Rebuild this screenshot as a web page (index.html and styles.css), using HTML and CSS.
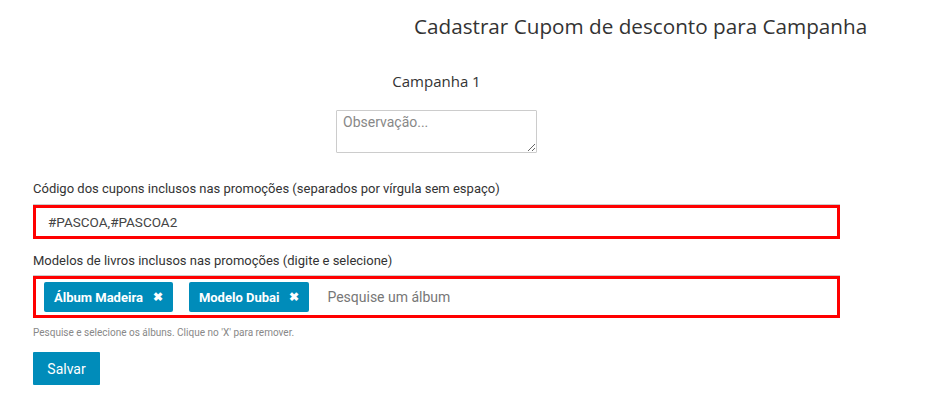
FILE: index.html
```html
<!DOCTYPE html>
<html lang="pt">
<head>
<meta charset="utf-8">
<link rel="stylesheet" href="styles.css">
</head>
<body>
<div class="page">
  <h1 class="title">Cadastrar Cupom de desconto para Campanha</h1>
  <div class="campaign">
    <div class="campaign-name">Campanha 1</div>
    <textarea class="obs" placeholder="Observação..."></textarea>
  </div>
  <label class="label">Código dos cupons inclusos nas promoções (separados por vírgula sem espaço)</label>
  <div class="field field-text">#PASCOA,#PASCOA2</div>
  <label class="label">Modelos de livros inclusos nas promoções (digite e selecione)</label>
  <div class="field field-tags">
    <span class="tag">Álbum Madeira <span class="x">✖</span></span>
    <span class="tag">Modelo Dubai <span class="x">✖</span></span>
    <span class="placeholder">Pesquise um álbum</span>
  </div>
  <div class="help">Pesquise e selecione os álbuns. Clique no 'X' para remover.</div>
  <button class="btn">Salvar</button>
</div>
</body>
</html>
```
FILE: styles.css
```css
* { box-sizing: border-box; }
body { margin: 0; background: #fff; font-family: Roboto, "Liberation Sans", sans-serif; color: #333; }
.page { width: 807px; margin-left: 33px; padding-top: 12px; }
.title { margin: 0 0 0 381px; font-family: "Open Sans", sans-serif; font-weight: 400; font-size: 20.7px; line-height: 28px; color: #333; white-space: nowrap; }
.campaign { display: flex; flex-direction: column; align-items: center; margin-top: 31px; }
.campaign-name { font-family: "Open Sans", sans-serif; font-size: 15px; line-height: 20px; color: #333; }
.obs { margin-top: 19px; width: 201px; height: 43px; border: 1px solid #ccc; border-radius: 1px; font-family: Roboto, sans-serif; font-size: 14px; padding: 3px 6px; resize: vertical; }
.obs::placeholder { color: #888; }
.label { display: block; margin-top: 28px; font-size: 13px; line-height: 16px; color: #333; }
.field { border: 3px solid #f00; margin-top: 8px; background: #fff; box-shadow: 0 -1px 0 #ccc; }
.field-text { height: 34px; padding: 0 12px; font-size: 13.5px; line-height: 28px; color: #444; }
.field-tags { height: 42px; display: flex; align-items: center; padding: 0 8px; gap: 16px; }
.label + .field-tags { margin-top: 7px; }
.field-text + .label { margin-top: 14px; }
.tag { display: inline-flex; align-items: center; height: 30px; padding: 0 10px; background: #008cba; color: #fff; font-weight: 700; font-size: 13px; border-radius: 2px; }
.tag .x { margin-left: 10px; font-size: 12px; }
.placeholder { margin-left: 2px; font-size: 14px; color: #777; }
.help { margin-top: 9px; font-size: 10px; color: #888; line-height: 12px; }
.btn { margin-top: 13px; width: 67px; height: 33px; border: 0; background: #008cba; color: #fff; font-family: Roboto, sans-serif; font-size: 14px; border-radius: 1px; }
```
